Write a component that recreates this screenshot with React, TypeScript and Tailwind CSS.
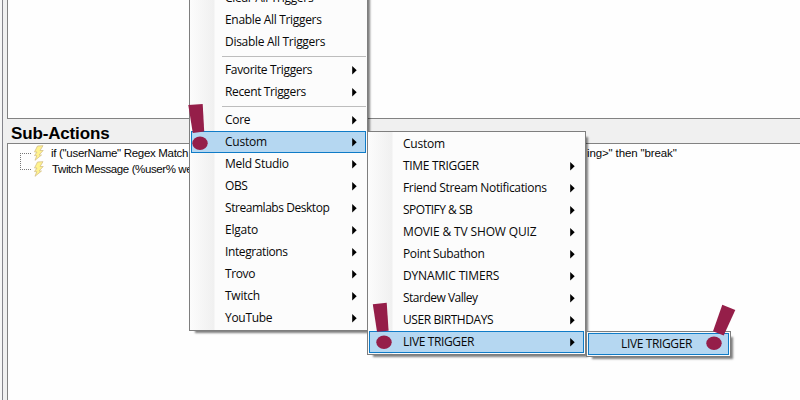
import React from "react";

type Entry = { label: string; ls?: string; active?: boolean; leaf?: boolean };

const mainGroups: Entry[][] = [
  [
    { label: "Clear All Triggers", ls: "tracking-[-0.3px]", leaf: true },
    { label: "Enable All Triggers", ls: "tracking-[-0.32px]", leaf: true },
    { label: "Disable All Triggers", ls: "tracking-[-0.3px]", leaf: true },
  ],
  [
    { label: "Favorite Triggers", ls: "tracking-[-0.35px]" },
    { label: "Recent Triggers", ls: "tracking-[-0.37px]" },
  ],
  [
    { label: "Core", ls: "tracking-[-0.3px]" },
    { label: "Custom", ls: "tracking-[-0.25px]", active: true },
    { label: "Meld Studio", ls: "tracking-[-0.28px]" },
    { label: "OBS", ls: "tracking-[-0.4px]" },
    { label: "Streamlabs Desktop", ls: "tracking-[-0.45px]" },
    { label: "Elgato", ls: "tracking-[-0.25px]" },
    { label: "Integrations", ls: "tracking-[-0.4px]" },
    { label: "Trovo", ls: "tracking-[-0.4px]" },
    { label: "Twitch", ls: "tracking-[-0.25px]" },
    { label: "YouTube", ls: "tracking-[-0.3px]" },
  ],
];

const customEntries: Entry[] = [
  { label: "Custom", ls: "tracking-[-0.25px]", leaf: true },
  { label: "TIME TRIGGER", ls: "tracking-[-0.3px]" },
  { label: "Friend Stream Notifications", ls: "tracking-[-0.34px]" },
  { label: "SPOTIFY & SB", ls: "tracking-[-0.5px]" },
  { label: "MOVIE & TV SHOW QUIZ", ls: "tracking-[-0.15px]" },
  { label: "Point Subathon", ls: "tracking-[-0.35px]" },
  { label: "DYNAMIC TIMERS", ls: "tracking-[-0.15px]" },
  { label: "Stardew Valley", ls: "tracking-[-0.5px]" },
  { label: "USER BIRTHDAYS", ls: "tracking-[-0.42px]" },
  { label: "LIVE TRIGGER", ls: "tracking-[-0.37px]", active: true },
];

function Row({ label, ls = "", active, leaf }: Entry) {
  return (
    <div
      className={`flex h-[22px] items-center justify-between border pr-[8px] pl-[33px] ${
        active ? "border-[#0f7bc7] bg-[#b5d7f1]" : "border-transparent"
      }`}
    >
      <span className={`whitespace-nowrap ${ls}`}>{label}</span>
      {!leaf && (
        <svg width="5" height="10" viewBox="0 0 5 10" className="shrink-0">
          <path d="M0.2 1 L4.7 5.2 L0.2 9.4Z" fill="#000" />
        </svg>
      )}
    </div>
  );
}

const menuBase =
  "absolute border border-[#7e7e7e] shadow-[4px_4px_2px_-2px_rgba(0,0,0,0.5)] bg-[linear-gradient(90deg,#fcfcfc_0px,#f0f0f0_24px,#fcfcfc_25px)]";

function Mark({ points, cx, cy }: { points: string; cx: number; cy: number }) {
  return (
    <g fill="#951e49">
      <polygon points={points} />
      <ellipse cx={cx} cy={cy} rx="7.7" ry="6.7" />
    </g>
  );
}

function Bolt() {
  return (
    <svg width="12" height="16" viewBox="0 0 12 16" className="shrink-0">
      <path
        d="M4.5 1 L10 .7 L7 5.5 L10.2 5.5 L6 10 L8.5 10 L2 15.3 L3.8 10.6 L1.5 10.6 L4 7 L1.5 7Z"
        fill="#fff38d"
        stroke="#d5c08a"
        strokeWidth=".8"
      />
    </svg>
  );
}

export default function App() {
  return (
    <div className="relative flex h-[400px] w-[800px] overflow-hidden bg-[#f0f0f0] font-['Open_Sans',sans-serif] text-[12px] leading-[20px] text-[#080808]">
      <div className="w-[3px] shrink-0 border-r border-[#85858c] bg-[#f6f6f6]" />
      <div className="ml-1 flex min-w-0 flex-1 flex-col">
        <div className="h-[119px] shrink-0 border-b border-l border-[#828282] bg-[#fefefe]" />
        <h2 className="h-6 shrink-0 pl-[4px] font-['Liberation_Sans',sans-serif] text-[17px] leading-[29px] font-bold tracking-[-0.15px] text-black">
          Sub-Actions
        </h2>
        <div className="flex flex-1 border-t border-l border-[#828282] bg-[#fefefe] pt-[1px] font-['Liberation_Sans',sans-serif] text-[11.5px] leading-[16px]">
          <div className="mt-[8px] ml-[12px] h-[17px] w-[11px] shrink-0 border-y border-l border-dotted border-[#777]" />
          <div className="ml-[2px]">
            <div className="flex h-4 items-center whitespace-pre">
              <Bolt />
              <span className="ml-[6px] w-[536px] tracking-[-0.3px]">
                {'if ("userName" Regex Match'}
              </span>
              <span className="tracking-[-0.12px]">{'ing>" then "break"'}</span>
            </div>
            <div className="flex h-4 items-center whitespace-pre">
              <Bolt />
              <span className="ml-[7px] tracking-[-0.4px]">Twitch Message (%user% we</span>
            </div>
          </div>
        </div>
      </div>

      <div className={`${menuBase} top-[-14px] left-[189px] w-[179px] px-[1px] pb-[1px]`}>
        {mainGroups.map((group, i) => (
          <React.Fragment key={i}>
            {i > 0 && <div className="my-[2.5px] ml-[31px] h-px bg-[#bdbdbd]" />}
            {group.map((e) => (
              <Row key={e.label} {...e} />
            ))}
          </React.Fragment>
        ))}
      </div>

      <div className={`${menuBase} top-[131px] left-[367px] w-[219px] px-[1px] pt-[1px] pb-[1px]`}>
        {customEntries.map((e) => (
          <Row key={e.label} {...e} />
        ))}
      </div>

      <div className={`${menuBase} top-[331px] left-[586px] h-[26px] w-[145px] p-[1px]`}>
        <Row label="LIVE TRIGGER" ls="tracking-[-0.37px] -ml-px" active leaf />
      </div>

      <svg className="absolute inset-0" width="800" height="400" viewBox="0 0 800 400">
        <Mark points="188.3,105 202.7,104 204.2,131.5 192.8,133" cx={200} cy={143.3} />
        <Mark points="372.8,304.3 386.7,302.8 388.6,330.8 377,331.7" cx={384} cy={342.3} />
        <Mark points="722.3,304.7 735.3,310 723.7,335.6 713,331.3" cx={714} cy={343.3} />
      </svg>
    </div>
  );
}
